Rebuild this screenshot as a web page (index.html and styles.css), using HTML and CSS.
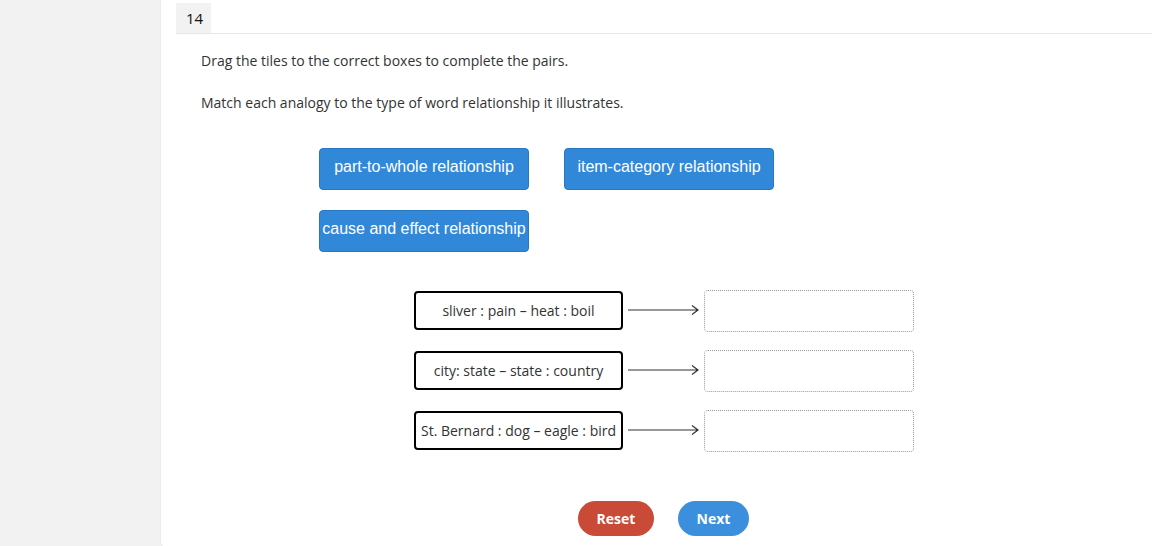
FILE: index.html
```html
<!DOCTYPE html>
<html>
<head>
<meta charset="utf-8">
<link rel="stylesheet" href="styles.css">
</head>
<body>
<div class="page">
  <div class="side"></div>
  <div class="panel">
    <div class="head"><div class="num">14</div></div>
    <div class="content">
      <p class="instr">Drag the tiles to the correct boxes to complete the pairs.</p>
      <p class="instr second">Match each analogy to the type of word relationship it illustrates.</p>
      <div class="tiles">
        <div class="tile">part-to-whole relationship</div>
        <div class="tile">item-category relationship</div>
        <div class="tile">cause and effect relationship</div>
      </div>
      <div class="pairs">
        <div class="pair">
          <div class="term">sliver : pain – heat : boil</div>
          <svg class="arrow" width="76" height="12" viewBox="0 0 76 12"><path d="M0 6H70M64 1.5L70 6L64 10.5" fill="none" stroke="#333" stroke-width="1.2"/></svg>
          <div class="drop"></div>
        </div>
        <div class="pair">
          <div class="term">city: state – state : country</div>
          <svg class="arrow" width="76" height="12" viewBox="0 0 76 12"><path d="M0 6H70M64 1.5L70 6L64 10.5" fill="none" stroke="#333" stroke-width="1.2"/></svg>
          <div class="drop"></div>
        </div>
        <div class="pair">
          <div class="term">St. Bernard : dog – eagle : bird</div>
          <svg class="arrow" width="76" height="12" viewBox="0 0 76 12"><path d="M0 6H70M64 1.5L70 6L64 10.5" fill="none" stroke="#333" stroke-width="1.2"/></svg>
          <div class="drop"></div>
        </div>
      </div>
      <div class="actions">
        <button class="btn reset">Reset</button>
        <button class="btn next">Next</button>
      </div>
    </div>
  </div>
</div>
</body>
</html>
```
FILE: styles.css
```css
html, body {
  margin: 0;
  padding: 0;
  background: #f2f2f2;
  font-family: "Open Sans", "Liberation Sans", sans-serif;
  color: #333;
}
.page {
  display: flex;
  height: 546px;
}
.side {
  width: 160px;
  flex: none;
}
.panel {
  flex: 1;
  background: #fff;
  height: 544px;
  border-bottom: 1px solid #dcdcdc;
  border-left: 1px solid #ececec;
  border-bottom-left-radius: 6px;
  padding: 3px 11px 0 15px;
  box-sizing: content-box;
}
.head {
  border-bottom: 1px solid #e6e6e6;
  height: 30px;
}
.num {
  width: 35px;
  height: 30px;
  background: #f2f2f2;
  font-size: 15px;
  line-height: 30px;
  padding-left: 10px;
  box-sizing: border-box;
  color: #111;
}
.content {
  padding-left: 25px;
}
.instr {
  margin: 17px 0 0;
  font-size: 14px;
  line-height: 20px;
}
.instr.second {
  margin-top: 22px;
}
.tiles {
  display: grid;
  grid-template-columns: 210px 210px;
  column-gap: 35px;
  row-gap: 20px;
  margin: 35px 0 0 118px;
}
.tile {
  height: 42px;
  box-sizing: border-box;
  background: #3288d8;
  border: 1px solid #2a78c2;
  border-radius: 4px;
  color: #fff;
  font-family: "Liberation Sans", Arial, sans-serif;
  font-size: 16px;
  display: flex;
  align-items: center;
  justify-content: center;
  padding-bottom: 4px;
  white-space: nowrap;
}
.pairs {
  margin: 38px 0 0 213px;
  display: flex;
  flex-direction: column;
  gap: 18px;
}
.pair {
  display: flex;
  align-items: center;
  height: 42px;
}
.term {
  width: 209px;
  height: 39px;
  box-sizing: border-box;
  border: 2px solid #000;
  border-radius: 4px;
  font-size: 14px;
  display: flex;
  align-items: center;
  justify-content: center;
  white-space: nowrap;
  margin-bottom: 2px;
}
.arrow {
  margin-left: 5px;
  display: block;
  width: 76px;
  margin-bottom: 2px;
}
.drop {
  width: 210px;
  height: 42px;
  box-sizing: border-box;
  border: 1px dotted #999;
  border-radius: 4px;
}
.actions {
  display: flex;
  gap: 24px;
  margin: 49px 0 0 377px;
}
.btn {
  border: none;
  height: 35px;
  border-radius: 18px;
  color: #fff;
  font-family: "Open Sans", "Liberation Sans", sans-serif;
  font-weight: bold;
  font-size: 14px;
  padding: 0;
}
.reset {
  width: 76px;
  background: #c94a36;
}
.next {
  width: 71px;
  background: #3c8fdd;
}
```
